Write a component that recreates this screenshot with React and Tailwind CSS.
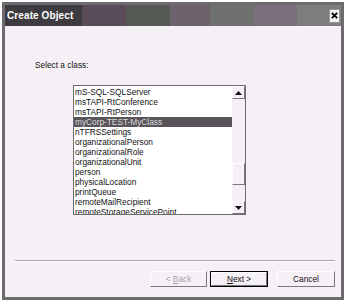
import React from "react";

const classes = [
  "mS-SQL-SQLServer",
  "msTAPI-RtConference",
  "msTAPI-RtPerson",
  "myCorp-TEST-MyClass",
  "nTFRSSettings",
  "organizationalPerson",
  "organizationalRole",
  "organizationalUnit",
  "person",
  "physicalLocation",
  "printQueue",
  "remoteMailRecipient",
  "remoteStorageServicePoint",
];

const raised =
  "border border-t-white border-l-white border-r-[#7a767c] border-b-[#7a767c]";

const ArrowUp = () => (
  <svg width="7" height="4" viewBox="0 0 7 4">
    <path d="M3.5 0 L7 4 L0 4 Z" fill="#111" />
  </svg>
);

const ArrowDown = () => (
  <svg width="7" height="4" viewBox="0 0 7 4">
    <path d="M0 0 L7 0 L3.5 4 Z" fill="#111" />
  </svg>
);

const App = () => {
  return (
    <div
      className="w-[350px] h-[302px] bg-white pt-[2px] pl-[2px]"
      style={{ fontFamily: '"Liberation Sans", Arial, sans-serif' }}
    >
      {/* DIALOG */}
      <div className="w-[342px] h-[298px] border-[3px] border-[#6e6a70] bg-[#f5f0f6] flex flex-col">

        {/* TITLE BAR */}
        <div className="h-[21px] flex items-center justify-between pl-[2px] pr-[1px] bg-[linear-gradient(90deg,#3d3a40_23%,#5a4b58_23%,#5a4b58_36%,#555a55_36%,#555a55_49%,#6c626c_49%,#6c626c_61%,#6e716e_61%,#6e716e_74%,#7c6e7c_74%,#7c6e7c_87%,#7b7e7b_87%)]">
          <span className="text-white font-bold text-[10px] leading-[12px] tracking-[0.1px]">
            Create Object
          </span>
          <button className="w-[11px] h-[14px] bg-[#f2f0f2] flex items-center justify-center border border-[#9a969c]">
            <svg width="7" height="7" viewBox="0 0 7 7">
              <path d="M0.8 0.8 L6.2 6.2 M6.2 0.8 L0.8 6.2" stroke="#000" strokeWidth="1.8" />
            </svg>
          </button>
        </div>

        {/* BODY */}
        <div className="flex-1 flex flex-col">
          <p className="mt-[34px] ml-[30px] text-[8.3px] leading-[10px] text-[#111]">
            Select a class:
          </p>

          {/* LISTBOX */}
          <div className="mt-[15px] ml-[68px] w-[173px] h-[130px] border border-[#6f6b70] bg-white flex">
            <div className="w-[158px] pt-[1px] overflow-hidden">
              {classes.map((c, i) => (
                <div
                  key={c}
                  className={`h-[10px] pl-[1px] text-[8.3px] leading-[10px] whitespace-nowrap ${
                    i === 3 ? "bg-[#58545a] text-[#dcdcdc]" : "text-[#111]"
                  }`}
                >
                  {c}
                </div>
              ))}
            </div>

            {/* SCROLLBAR */}
            <div className="w-[13px] flex flex-col bg-[#f5f0f6]">
              <div className={`h-[13px] flex items-center justify-center bg-[#f5f0f6] ${raised}`}>
                <ArrowUp />
              </div>
              <div className={`mt-[64px] h-[22px] bg-[#f5f0f6] ${raised}`} />
              <div className={`mt-auto h-[13px] flex items-center justify-center bg-[#f5f0f6] ${raised}`}>
                <ArrowDown />
              </div>
            </div>
          </div>

          {/* SEPARATOR */}
          <div className="mt-[45px] ml-[10px] mr-[6px] h-[2px] border-t border-t-[#a9a5ab] border-b border-b-white" />

          {/* BUTTONS */}
          <div className="mt-[9px] mr-[6px] flex justify-end items-start">
            <button className={`w-[57px] h-[16px] flex items-center justify-center text-[8.3px] leading-[10px] text-[#a8a4aa] ${raised}`}>
              &lt;&nbsp;<span className="underline">B</span>ack
            </button>
            <div className="ml-[3px] w-[58px] h-[16px] border border-black flex">
              <button className={`flex-1 flex items-center justify-center text-[8.3px] leading-[10px] text-[#111] ${raised}`}>
                <span className="underline">N</span>ext&nbsp;&gt;
              </button>
            </div>
            <button className={`ml-[9px] w-[58px] h-[16px] flex items-center justify-center text-[8.3px] leading-[10px] text-[#111] ${raised}`}>
              Cancel
            </button>
          </div>
        </div>
      </div>
    </div>
  );
};

export default App;
